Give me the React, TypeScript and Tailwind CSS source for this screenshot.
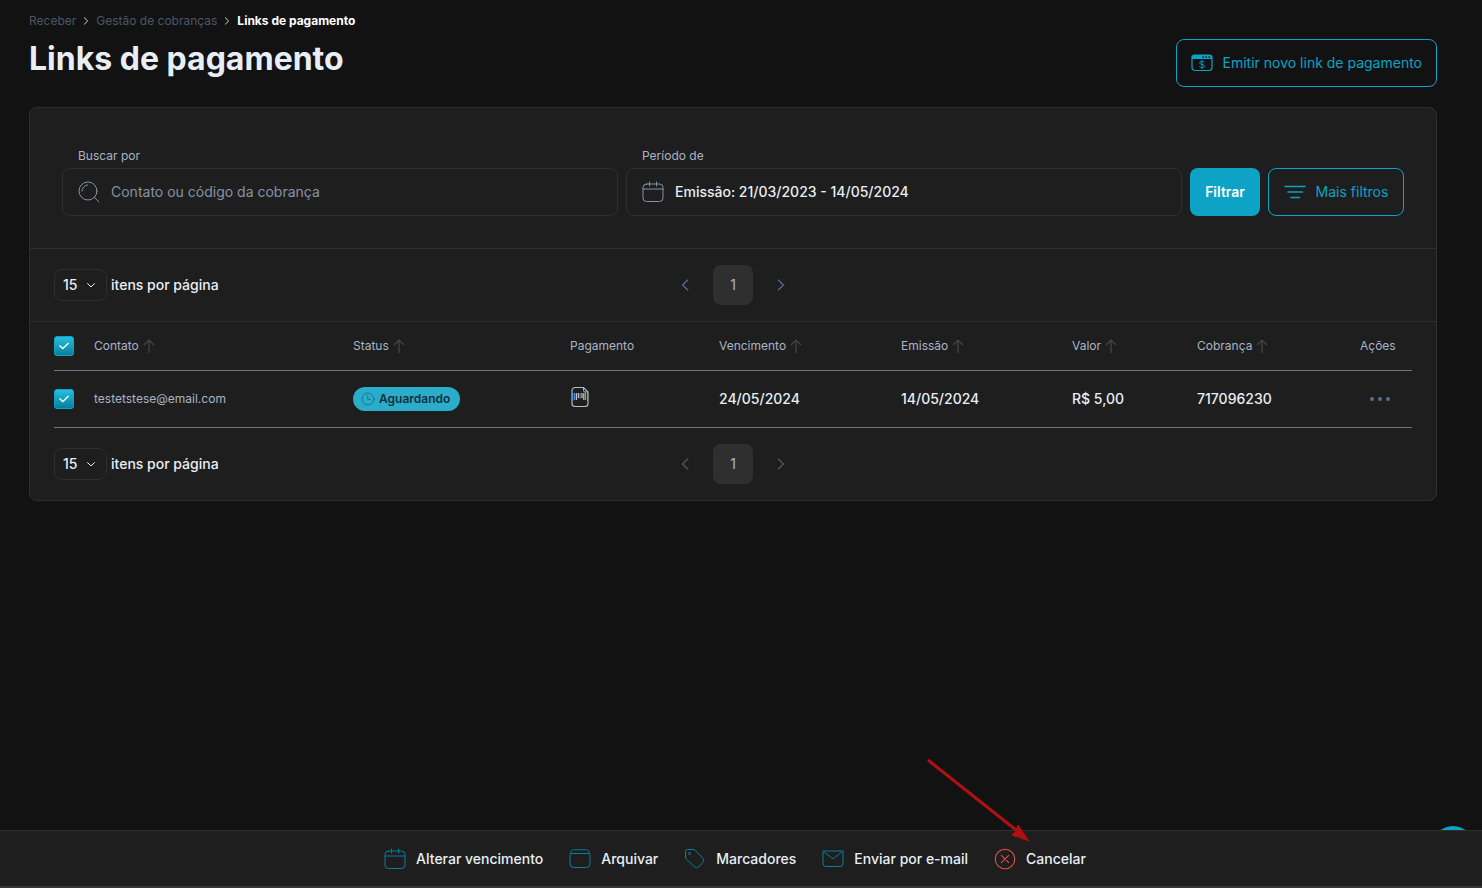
import React, { useState } from 'react';

type IconProps = { className?: string };

function CalendarIcon({ className }: IconProps) {
    return (
        <svg viewBox="0 0 22 22" className={className} fill="none" stroke="currentColor" strokeLinecap="round" aria-hidden="true">
            <rect x="1" y="3" width="20" height="17.5" rx="3.5" />
            <path d="M1 8h20M7.5 1v4M14.5 1v4" />
        </svg>
    );
}

function SearchIcon({ className }: IconProps) {
    return (
        <svg viewBox="0 0 22 22" className={className} fill="none" stroke="currentColor" strokeLinecap="round" aria-hidden="true">
            <circle cx="10" cy="10" r="9" />
            <path d="M16.5 16.5L21 21M4 10a6 6 0 0 1 5.5-6" />
        </svg>
    );
}

function PaymentLinkIcon({ className }: IconProps) {
    return (
        <svg viewBox="0 0 22 18" className={className} aria-hidden="true">
            <path d="M3.5 1h15A2.5 2.5 0 0 1 21 3.5v10a3 3 0 0 1-3 3H4a3 3 0 0 1-3-3v-10A2.5 2.5 0 0 1 3.5 1z" fill="none" stroke="currentColor" strokeWidth="1.2" />
            <path d="M1 5V3a2 2 0 0 1 2-2h16a2 2 0 0 1 2 2v2z" fill="currentColor" />
            <path d="M11.5 2.2H13v1.6h-1.5zM14.500 2.200H16v1.600h-1.500zM17.500 2.200H19v1.600h-1.500z" fill="#121212" />
            <path d="M13.300 8.500c-.3-.8-1.200-1.200-2.300-1.200-1.300 0-2.300.6-2.300 1.600 0 2.200 4.800 1 4.800 3.200 0 1-1.100 1.600-2.500 1.600-1.300 0-2.200-.5-2.500-1.300M11 6.200v8.600" fill="none" stroke="currentColor" strokeWidth=".9" />
        </svg>
    );
}

function FilterIcon({ className }: IconProps) {
    return (
        <svg viewBox="0 0 22 16" className={className} fill="none" stroke="currentColor" strokeWidth="1.6" strokeLinecap="round" aria-hidden="true">
            <path d="M1 2.500h20M4 8h14.500M7 13.500h8.500" />
        </svg>
    );
}

function SortIcon() {
    return (
        <svg viewBox="0 0 12 14" className="h-3.5 w-3 shrink-0 text-[#45474a]" fill="none" stroke="currentColor" strokeWidth="1.2" aria-hidden="true">
            <path d="M6 14V1M1 6l5-5 5 5" />
        </svg>
    );
}

function ClockIcon({ className }: IconProps) {
    return (
        <svg viewBox="0 0 14 14" className={className} fill="none" stroke="currentColor" strokeWidth=".9" strokeLinecap="round" aria-hidden="true">
            <circle cx="7" cy="7" r="6" />
            <path d="M6.700 3.500v3.800h2.800" />
        </svg>
    );
}

function BoletoIcon({ className }: IconProps) {
    return (
        <svg viewBox="0 0 18 22" className={className} fill="none" stroke="currentColor" aria-hidden="true">
            <path d="M4 1.500h8.500l4.500 4.500v11.500a3 3 0 0 1-3 3H4a3 3 0 0 1-3-3v-13a3 3 0 0 1 3-3z" strokeWidth="1.1" />
            <path d="M12.500 1.500v3a1.500 1.500 0 0 0 1.500 1.500h3" />
            <path d="M1.500 7v8M3.500 7v7" stroke="#4f8fd0" strokeWidth="1.4" />
            <path d="M16.500 7v8M14.500 7v7" stroke="#b98d4f" strokeWidth="1.2" />
            <path d="M5.500 7v7M7.500 7v5M11 7v5M12.800 7v7" strokeWidth="1.3" />
            <path d="M9.200 7v6" stroke="#8f7a60" strokeWidth=".9" />
        </svg>
    );
}

function ArchiveIcon({ className }: IconProps) {
    return (
        <svg viewBox="0 0 22 22" className={className} fill="none" stroke="currentColor" aria-hidden="true">
            <path d="M1.500 5.500C1.200 6 1 7 1 8v8a3.500 3.500 0 0 0 3.500 3.500h13A3.500 3.500 0 0 0 21 16V8c0-1-.2-2-.5-2.500z" />
            <path d="M1.500 5.500C2 3 3 1.800 5.500 1.800h11c2.500 0 3.500 1.200 4 3.700" />
        </svg>
    );
}

function TagIcon({ className }: IconProps) {
    return (
        <svg viewBox="0 0 22 22" className={className} fill="none" stroke="currentColor" strokeLinejoin="round" aria-hidden="true">
            <path d="M3.500 1.500H9a3 3 0 0 1 2.200.9l7.700 7.900a3 3 0 0 1 0 4.200l-4.200 4.200a3 3 0 0 1-4.200 0L2.400 11.200A3 3 0 0 1 1.500 9V3.500a2 2 0 0 1 2-2z" />
            <circle cx="5.500" cy="5.500" r="1" />
        </svg>
    );
}

function MailIcon({ className }: IconProps) {
    return (
        <svg viewBox="0 0 22 22" className={className} fill="none" stroke="currentColor" strokeLinejoin="round" aria-hidden="true">
            <path d="M1 3h20v12.500a3 3 0 0 1-3 3H4a3 3 0 0 1-3-3z" />
            <path d="M1.500 3.500l8 6.300a2.500 2.500 0 0 0 3 0l8-6.300" />
        </svg>
    );
}

function CancelIcon({ className }: IconProps) {
    return (
        <svg viewBox="0 0 22 22" className={className} fill="none" stroke="currentColor" strokeWidth="1.1" strokeLinecap="round" aria-hidden="true">
            <circle cx="11" cy="11" r="9.800" />
            <path d="M7.300 7.300l7.400 7.400M14.700 7.300l-7.400 7.400" />
        </svg>
    );
}

function Chevron({ d, className }: { d: string; className?: string }) {
    return (
        <svg viewBox="0 0 12 12" className={className} fill="none" stroke="currentColor" strokeWidth="1.2" aria-hidden="true">
            <path d={d} />
        </svg>
    );
}

const LEFT = 'M9 .7L3.500 6L9 11.300';
const RIGHT = 'M3 .7L8.500 6L3 11.300';
const DOWN = 'M1.500 4L6 8.300L10.500 4';

function Checkbox({ label }: { label: string }) {
    const [checked, setChecked] = useState(true);
    return (
        <span className="relative block h-5 w-5">
            <input
                type="checkbox"
                aria-label={label}
                checked={checked}
                onChange={() => setChecked(!checked)}
                className="block h-5 w-5 appearance-none rounded-[3px] border border-[#0ca3c6] checked:bg-linear-to-b checked:from-[#27bfe2] checked:to-[#067f9c]"
            />
            {checked && (
                <svg viewBox="0 0 20 20" className="pointer-events-none absolute inset-0 text-white" fill="none" stroke="currentColor" strokeWidth="1.3" aria-hidden="true">
                    <path d="M5.500 9.500l3.300 3L14.500 7" />
                </svg>
            )}
        </span>
    );
}

function Pagination({ id, arrow }: { id: string; arrow: string }) {
    return (
        <div className="grid grid-cols-[1fr_auto_1fr] items-center px-6 py-4">
            <div className="flex items-center gap-1">
                <div className="relative">
                    <select id={id} className="h-8 w-[53px] appearance-none rounded-lg border border-[#2f2f2f] bg-transparent pl-2 text-sm font-medium text-[#e8eef5]">
                        <option>15</option>
                        <option>30</option>
                        <option>50</option>
                    </select>
                    <Chevron d={DOWN} className="pointer-events-none absolute top-[11px] right-[11px] h-2.5 w-2.5 text-[#e8eef5]" />
                </div>
                <label htmlFor={id} className="text-sm font-medium text-[#e8eef5]">itens por página</label>
            </div>
            <nav className={`flex items-center gap-2 ${arrow}`} aria-label="Paginação">
                <button type="button" aria-label="Página anterior" className="flex h-10 w-10 items-center justify-center">
                    <Chevron d={LEFT} className="h-3 w-3" />
                </button>
                <button type="button" className="h-10 w-10 rounded-lg bg-[#2f2f2f] text-sm text-[#a9b4c6]">1</button>
                <button type="button" aria-label="Próxima página" className="flex h-10 w-10 items-center justify-center">
                    <Chevron d={RIGHT} className="h-3 w-3" />
                </button>
            </nav>
        </div>
    );
}

const columns = [
    { name: 'Contato', sort: true, width: 'w-[259px]' },
    { name: 'Status', sort: true, width: 'w-[217px]' },
    { name: 'Pagamento', sort: false, width: 'w-[149px]' },
    { name: 'Vencimento', sort: true, width: 'w-[182px]' },
    { name: 'Emissão', sort: true, width: 'w-[171px]' },
    { name: 'Valor', sort: true, width: 'w-[125px]' },
    { name: 'Cobrança', sort: true, width: 'w-[163px]' },
    { name: 'Ações', sort: false, width: 'w-[52px]' },
];

const actions = [
    { name: 'Alterar vencimento', Icon: CalendarIcon },
    { name: 'Arquivar', Icon: ArchiveIcon },
    { name: 'Marcadores', Icon: TagIcon },
    { name: 'Enviar por e-mail', Icon: MailIcon },
];

export default function App() {
    return (
        <div className="min-h-screen bg-[#121212] pr-[45px] pb-20 pl-[29px] font-['Inter','Liberation_Sans',sans-serif] text-[#e8eef5]">
            {/* Page header */}
            <header className="flex items-start justify-between pt-[11px]">
                <div>
                    <nav aria-label="Navegação" className="flex items-center gap-1 text-xs leading-5 text-[#4b5768]">
                        <a href="#receber">Receber</a>
                        <Chevron d={RIGHT} className="h-2 w-3 text-white" />
                        <a href="#cobrancas">Gestão de cobranças</a>
                        <Chevron d={RIGHT} className="h-2 w-3 text-white" />
                        <a href="#links" aria-current="page" className="font-bold text-white">Links de pagamento</a>
                    </nav>
                    <h1 className="mt-2 text-[32px] leading-10 font-bold">Links de pagamento</h1>
                </div>
                <button type="button" className="mt-7 flex h-12 items-center gap-2.5 rounded-lg border border-[#0ca3c6] px-3.5 text-sm text-[#0ca3c6]">
                    <PaymentLinkIcon className="h-[18px] w-[22px]" />
                    Emitir novo link de pagamento
                </button>
            </header>

            <main className="mt-5 rounded-lg border border-[#2f2f2f] bg-[#1e1e1e]">
                {/* Filters */}
                <form className="flex items-end gap-2 border-b border-[#2f2f2f] px-8 pt-10 pb-8">
                    <div className="flex-1">
                        <label htmlFor="busca" className="mb-1 block pl-4 text-xs leading-4 text-[#a9b4c6]">Buscar por</label>
                        <div className="flex h-12 items-center gap-[11px] rounded-lg border border-[#2f2f2f] px-[15px]">
                            <SearchIcon className="h-[22px] w-[22px] shrink-0 text-[#8592a8]" />
                            <input id="busca" type="text" placeholder="Contato ou código da cobrança" className="min-w-0 flex-1 bg-transparent text-sm placeholder:text-[#8592a8] focus:outline-none" />
                        </div>
                    </div>
                    <div className="flex-1">
                        <label htmlFor="periodo" className="mb-1 block pl-4 text-xs leading-4 text-[#a9b4c6]">Período de</label>
                        <div className="flex h-12 items-center gap-[11px] rounded-lg border border-[#2f2f2f] px-[15px]">
                            <CalendarIcon className="h-[22px] w-[22px] shrink-0 text-[#8592a8]" />
                            <input id="periodo" type="text" defaultValue="Emissão: 21/03/2023 - 14/05/2024" className="min-w-0 flex-1 bg-transparent text-sm font-medium focus:outline-none" />
                        </div>
                    </div>
                    <button type="button" className="h-12 w-[70px] rounded-lg bg-[#0ca3c6] text-sm font-semibold text-white">Filtrar</button>
                    <button type="button" className="flex h-12 w-[136px] items-center justify-center gap-2.5 rounded-lg border border-[#0ca3c6] text-sm text-[#0ca3c6]">
                        <FilterIcon className="h-4 w-[22px]" />
                        Mais filtros
                    </button>
                </form>

                <Pagination id="itens-topo" arrow="text-[#56708f]" />

                {/* Charges */}
                <div className="overflow-x-auto border-t border-[#2f2f2f] px-6">
                    <table className="w-full table-fixed text-left">
                        <thead>
                            <tr className="h-12 border-b border-[#6b7686] text-xs text-[#a9b4c6]">
                                <th className="w-10"><Checkbox label="Selecionar todos" /></th>
                                {columns.map((column) => (
                                    <th key={column.name} className={`font-normal ${column.width}`}>
                                        <span className="flex items-center gap-1">
                                            {column.name}
                                            {column.sort && <SortIcon />}
                                        </span>
                                    </th>
                                ))}
                            </tr>
                        </thead>
                        <tbody>
                            <tr className="h-[57px] border-b border-[#6b7686] text-sm font-medium">
                                <td><Checkbox label="Selecionar testetstese@email.com" /></td>
                                <td className="text-xs font-normal text-[#a9b4c6]">testetstese@email.com</td>
                                <td>
                                    <span className="inline-flex h-6 items-center gap-1 rounded-full bg-[#2aaccb] pr-2.5 pl-2 align-middle text-xs font-semibold text-[#14303a]">
                                        <ClockIcon className="h-3.5 w-3.5 text-[#14708a]" />
                                        Aguardando
                                    </span>
                                </td>
                                <td><BoletoIcon className="mb-1 ml-px h-[22px] w-[18px] text-[#b4bfce]" /></td>
                                <td>24/05/2024</td>
                                <td>14/05/2024</td>
                                <td>R$ 5,00</td>
                                <td>717096230</td>
                                <td>
                                    <button type="button" aria-label="Ações" className="ml-2.5 block text-[#5b6f8a]">
                                        <svg viewBox="0 0 20 6" className="h-1.5 w-5" fill="currentColor" aria-hidden="true">
                                            <circle cx="2" cy="3" r="2" />
                                            <circle cx="10" cy="3" r="2" />
                                            <circle cx="18" cy="3" r="2" />
                                        </svg>
                                    </button>
                                </td>
                            </tr>
                        </tbody>
                    </table>
                </div>

                <Pagination id="itens-rodape" arrow="text-[#4f5b6b]" />
            </main>

            {/* Chat bubble, mostly behind the bottom bar */}
            <button type="button" aria-label="Ajuda" className="fixed right-[9px] bottom-[22px] h-10 w-10 rounded-full bg-[#0ca3c6]" />

            {/* Bulk actions */}
            <footer className="fixed inset-x-0 bottom-0 flex h-[58px] items-center justify-center gap-[26px] border-t border-b-2 border-t-[#2f2f2f] border-b-[#393637] bg-[#1e1e1e] pr-3 text-sm font-medium">
                {actions.map(({ name, Icon }) => (
                    <button key={name} type="button" className="flex items-center gap-2.5">
                        <Icon className="h-[22px] w-[22px] text-[#067f9c]" />
                        {name}
                    </button>
                ))}
                <button type="button" className="relative flex items-center gap-2.5">
                    <CancelIcon className="h-[22px] w-[22px] text-[#e0504d]" />
                    Cancelar
                    <svg viewBox="0 0 104 84" className="pointer-events-none absolute right-14 bottom-7 h-[84px] w-[104px] max-w-none" aria-hidden="true">
                        <path d="M2 2L90 72" stroke="#b01013" strokeWidth="3" />
                        <path d="M103 83L86 77L90 73L92 67Z" fill="#b01013" stroke="#b01013" />
                    </svg>
                </button>
            </footer>
        </div>
    );
}
